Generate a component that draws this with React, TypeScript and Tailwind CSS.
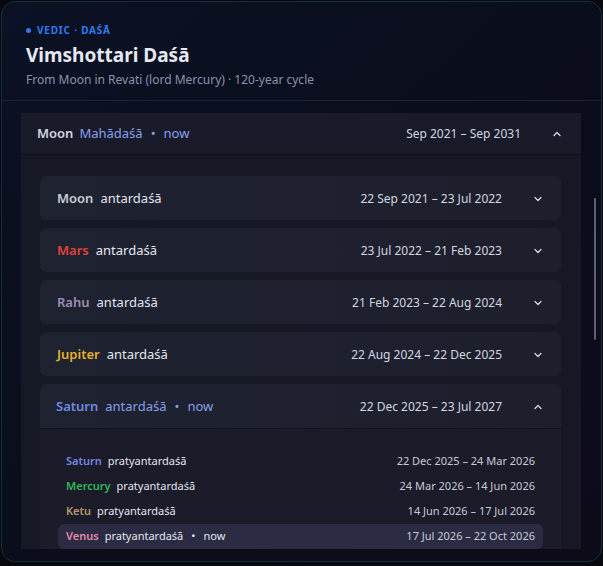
import { ChevronDown, ChevronUp } from "lucide-react";

type Period = { lord: string; color: string; range: string; now?: boolean };

const antardashas: Period[] = [
  { lord: "Moon", color: "text-[#c9cdd9]", range: "22 Sep 2021 – 23 Jul 2022" },
  { lord: "Mars", color: "text-[#e2443b]", range: "23 Jul 2022 – 21 Feb 2023" },
  { lord: "Rahu", color: "text-[#9d90b3]", range: "21 Feb 2023 – 22 Aug 2024" },
  { lord: "Jupiter", color: "text-[#e4b22c]", range: "22 Aug 2024 – 22 Dec 2025" },
];

const pratyantar: Period[] = [
  { lord: "Saturn", color: "text-[#7489e0]", range: "22 Dec 2025 – 24 Mar 2026" },
  { lord: "Mercury", color: "text-[#2fb85b]", range: "24 Mar 2026 – 14 Jun 2026" },
  { lord: "Ketu", color: "text-[#b8976f]", range: "14 Jun 2026 – 17 Jul 2026" },
  { lord: "Venus", color: "text-[#e98aab]", range: "17 Jul 2026 – 22 Oct 2026", now: true },
];

function AntarRow({ p }: { p: Period }) {
  return (
    <div className="flex h-[44px] items-center rounded-md bg-gradient-to-r from-[#1e2231] to-[#1e1f2d] pl-[17px] pr-[17px] pt-px">
      <span className={`text-[13px] font-semibold ${p.color}`}>{p.lord}</span>
      <span className="ml-[7px] text-[13px] text-[#e4e6ee]">antardaśā</span>
      <span className="ml-auto text-[12px] text-[#d3d6e0]">{p.range}</span>
      <ChevronDown className="ml-[30px] h-3 w-3 text-[#d7dae3]" strokeWidth={2.5} />
    </div>
  );
}

export default function App() {
  return (
    <div
      className="h-[566px] w-[603px] overflow-hidden bg-[#08080f] p-px"
      style={{ fontFamily: '"Noto Sans", "Open Sans", sans-serif' }}
    >
      <div className="relative flex h-[561px] flex-col overflow-hidden rounded-[14px] border border-[#14303a] bg-gradient-to-br from-[#0b1225] via-[#0a0d1b] to-[#0e0b19]">
        {/* header */}
        <div className="border-b border-[#1b2232] px-[24px] pb-[12px] pt-[21px]">
          <div className="flex items-center gap-[6px] text-[10px] font-bold tracking-[0.08em] text-[#2d7bf0]">
            <span className="h-[5px] w-[5px] rounded-full bg-[#2d7bf0]" />
            VEDIC · DAŚĀ
          </div>
          <h1 className="mt-[4px] text-[19px] font-bold leading-[26px] text-[#e6e8f2]">Vimshottari Daśā</h1>
          <p className="mt-[4px] text-[12px] leading-[16px] text-[#8a93ab]">
            From Moon in Revati (lord Mercury) · 120-year cycle
          </p>
        </div>

        {/* scroll area */}
        <div className="min-h-0 flex-1 overflow-hidden pl-[19px] pr-[20px] pt-[12px]">
          <div className="rounded-sm bg-[#171826]">
            <div className="flex h-[42px] items-center border-b border-[#0f101a] bg-[#1a1b2a] pl-[16px] pr-[18px]">
              <span className="text-[13px] font-semibold text-[#d3d6e0]">Moon</span>
              <span className="ml-[6px] text-[13px] text-[#86a0ea]">Mahādaśā</span>
              <span className="ml-[8px] text-[13px] text-[#86a0ea]">•</span>
              <span className="ml-[8px] text-[13px] text-[#86a0ea]">now</span>
              <span className="ml-auto text-[12px] text-[#d3d6e0]">Sep 2021 – Sep 2031</span>
              <ChevronUp className="ml-[30px] h-3 w-3 text-[#d7dae3]" strokeWidth={2.5} />
            </div>
            <div className="flex flex-col gap-[8px] pl-[19px] pr-[20px] pt-[21px]">
              {antardashas.map((p) => (
                <AntarRow key={p.lord} p={p} />
              ))}
              <div className="overflow-hidden rounded-md bg-[#1b1b2a]">
                <div className="flex h-[45px] items-center border-b border-[#13131e] bg-gradient-to-r from-[#1e2231] to-[#1e1f2d] pl-[16px] pr-[17px] pt-[2px]">
                  <span className="text-[13px] font-semibold text-[#7489e0]">Saturn</span>
                  <span className="ml-[7px] text-[13px] text-[#86a0ea]">antardaśā</span>
                  <span className="ml-[8px] text-[13px] text-[#86a0ea]">•</span>
                  <span className="ml-[8px] text-[13px] text-[#86a0ea]">now</span>
                  <span className="ml-auto text-[12px] text-[#d3d6e0]">22 Dec 2025 – 23 Jul 2027</span>
                  <ChevronUp className="ml-[30px] h-3 w-3 text-[#d7dae3]" strokeWidth={2.5} />
                </div>
                <div className="flex flex-col px-[18px] pb-[12px] pt-[20px]">
                  {pratyantar.map((p) => (
                    <div
                      key={p.lord}
                      className={`flex h-[25px] items-center rounded-md px-[8px] text-[11px] ${p.now ? "bg-[#2b2c44]" : ""}`}
                    >
                      <span className={`font-semibold ${p.color}`}>{p.lord}</span>
                      <span className="ml-[6px] text-[#e4e6ee]">pratyantardaśā</span>
                      {p.now && (
                        <>
                          <span className="ml-[8px] text-[#e4e6ee]">•</span>
                          <span className="ml-[8px] text-[#e4e6ee]">now</span>
                        </>
                      )}
                      <span className="ml-auto text-[#c8cbd6]">{p.range}</span>
                    </div>
                  ))}
                </div>
              </div>
            </div>
          </div>
        </div>
        <div className="h-[12px] shrink-0" />

        {/* scrollbar thumb */}
        <div className="absolute right-[5px] top-[196px] h-[142px] w-[2px] rounded-full bg-[#5d6070]" />
      </div>
    </div>
  );
}
